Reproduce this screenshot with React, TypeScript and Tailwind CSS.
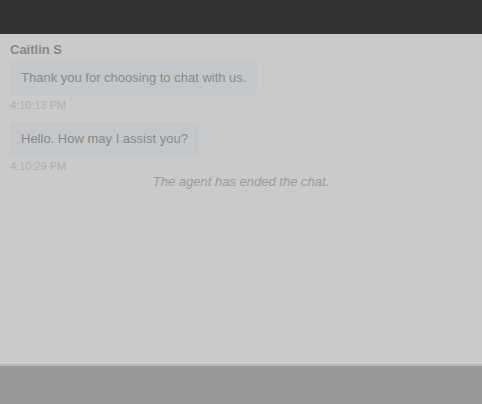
import React from 'react';

type Message = { text: string; time: string };

const messages: Message[] = [
    { text: 'Thank you for choosing to chat with us.', time: '4:10:13 PM' },
    { text: 'Hello. How may I assist you?', time: '4:10:29 PM' },
];

const App: React.FC = () => {
    return (
        <div className="w-[482px] h-[404px] flex flex-col bg-[#cacaca] font-['Liberation_Sans',Arial,sans-serif] overflow-hidden">
            <header className="h-[34px] shrink-0 bg-[#333333]"></header>
            <div className="flex-grow px-[10px] pt-[8px]">
                <p className="text-[13px] leading-[16px] font-bold text-[#888888]">Caitlin S</p>
                <div className="flex flex-col gap-[6px]">
                    {messages.map((m, i) => (
                        <div key={i} className={i === 0 ? 'pt-[3px]' : 'pt-[4px]'}>
                            <div className="w-fit bg-[#c3c7c9] rounded-[3px] px-[11px] py-[8px] text-[13px] leading-[18px] text-[#8a8a8a]">
                                {m.text}
                            </div>
                            <p className="mt-[4px] text-[11px] leading-[13px] text-[#afafaf]">{m.time}</p>
                        </div>
                    ))}
                </div>
                <p className="mt-[1px] text-center italic text-[13px] leading-[16px] text-[#9c9c9c]">The agent has ended the chat.</p>
            </div>
            <div className="h-[40px] shrink-0 border-t-2 border-[#b8b8b8] bg-[#989898]"></div>
        </div>
    );
};

export default App;
